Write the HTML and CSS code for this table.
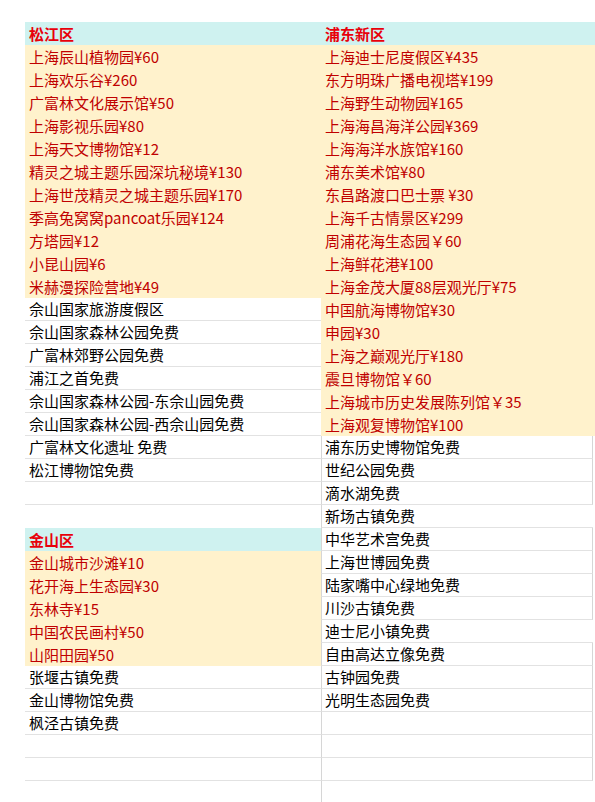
FILE: index.html
```html
<!DOCTYPE html>
<html lang="zh-CN">
<head>
<meta charset="utf-8">
<title>上海景点门票</title>
<link rel="stylesheet" href="styles.css">
</head>
<body>
<div class="sheet">
  <div class="col col-left">
    <div class="cell head">松江区</div>
    <div class="cell paid">上海辰山植物园¥60</div>
    <div class="cell paid">上海欢乐谷¥260</div>
    <div class="cell paid">广富林文化展示馆¥50</div>
    <div class="cell paid">上海影视乐园¥80</div>
    <div class="cell paid">上海天文博物馆¥12</div>
    <div class="cell paid">精灵之城主题乐园深坑秘境¥130</div>
    <div class="cell paid">上海世茂精灵之城主题乐园¥170</div>
    <div class="cell paid">季高兔窝窝pancoat乐园¥124</div>
    <div class="cell paid">方塔园¥12</div>
    <div class="cell paid">小昆山园¥6</div>
    <div class="cell paid">米赫漫探险营地¥49</div>
    <div class="cell free">佘山国家旅游度假区</div>
    <div class="cell free">佘山国家森林公园免费</div>
    <div class="cell free">广富林郊野公园免费</div>
    <div class="cell free">浦江之首免费</div>
    <div class="cell free">佘山国家森林公园-东佘山园免费</div>
    <div class="cell free">佘山国家森林公园-西佘山园免费</div>
    <div class="cell free">广富林文化遗址 免费</div>
    <div class="cell free">松江博物馆免费</div>
    <div class="cell free"></div>
    <div class="cell blank"></div>
    <div class="cell head">金山区</div>
    <div class="cell paid">金山城市沙滩¥10</div>
    <div class="cell paid">花开海上生态园¥30</div>
    <div class="cell paid">东林寺¥15</div>
    <div class="cell paid">中国农民画村¥50</div>
    <div class="cell paid">山阳田园¥50</div>
    <div class="cell free">张堰古镇免费</div>
    <div class="cell free">金山博物馆免费</div>
    <div class="cell free">枫泾古镇免费</div>
    <div class="cell free"></div>
    <div class="cell free"></div>
  </div>
  <div class="col col-right">
    <div class="cell head">浦东新区</div>
    <div class="cell paid">上海迪士尼度假区¥435</div>
    <div class="cell paid">东方明珠广播电视塔¥199</div>
    <div class="cell paid">上海野生动物园¥165</div>
    <div class="cell paid">上海海昌海洋公园¥369</div>
    <div class="cell paid">上海海洋水族馆¥160</div>
    <div class="cell paid">浦东美术馆¥80</div>
    <div class="cell paid">东昌路渡口巴士票 ¥30</div>
    <div class="cell paid">上海千古情景区¥299</div>
    <div class="cell paid">周浦花海生态园￥60</div>
    <div class="cell paid">上海鲜花港¥100</div>
    <div class="cell paid">上海金茂大厦88层观光厅¥75</div>
    <div class="cell paid">中国航海博物馆¥30</div>
    <div class="cell paid">申园¥30</div>
    <div class="cell paid">上海之巅观光厅¥180</div>
    <div class="cell paid">震旦博物馆￥60</div>
    <div class="cell paid">上海城市历史发展陈列馆￥35</div>
    <div class="cell paid">上海观复博物馆¥100</div>
    <div class="cell free boxed">浦东历史博物馆免费</div>
    <div class="cell free boxed">世纪公园免费</div>
    <div class="cell free boxed">滴水湖免费</div>
    <div class="cell free">新场古镇免费</div>
    <div class="cell free boxed">中华艺术宫免费</div>
    <div class="cell free boxed">上海世博园免费</div>
    <div class="cell free boxed">陆家嘴中心绿地免费</div>
    <div class="cell free boxed">川沙古镇免费</div>
    <div class="cell free">迪士尼小镇免费</div>
    <div class="cell free boxed">自由高达立像免费</div>
    <div class="cell free boxed">古钟园免费</div>
    <div class="cell free boxed">光明生态园免费</div>
    <div class="cell free boxed"></div>
    <div class="cell free boxed"></div>
    <div class="cell free boxed"></div>
    <div class="cell free tail"></div>
  </div>
</div>
</body>
</html>
```

FILE: styles.css
```css
html, body {
  margin: 0;
  padding: 0;
  background: #ffffff;
}

body {
  font-family: "Noto Sans CJK SC", "Noto Sans", sans-serif;
  font-size: 15px;
  color: #000000;
}

.sheet {
  display: flex;
  padding: 22px 0 0 25px;
  width: 570px;
}

.col {
  display: flex;
  flex-direction: column;
}

.col-left {
  width: 296px;
  flex: none;
}

.col-right {
  flex: 1;
}

.cell {
  box-sizing: border-box;
  height: 23px;
  line-height: 22px;
  padding-left: 4px;
  white-space: nowrap;
  overflow: hidden;
}

.head {
  background: #cff2f0;
  color: #e8000b;
  font-weight: bold;
  line-height: 23px;
}

.paid {
  background: #fff2cc;
  color: #c00000;
  line-height: 23px;
}

.free {
  border-bottom: 1px solid #e2e2e2;
}

.col-right .free {
  border-left: 1px solid #d6d6d6;
  padding-left: 3px;
  margin-right: 2px;
}

.col-right .boxed {
  border-right: 1px solid #d6d6d6;
}

.col-right .tail {
  border-bottom: none;
}
```
